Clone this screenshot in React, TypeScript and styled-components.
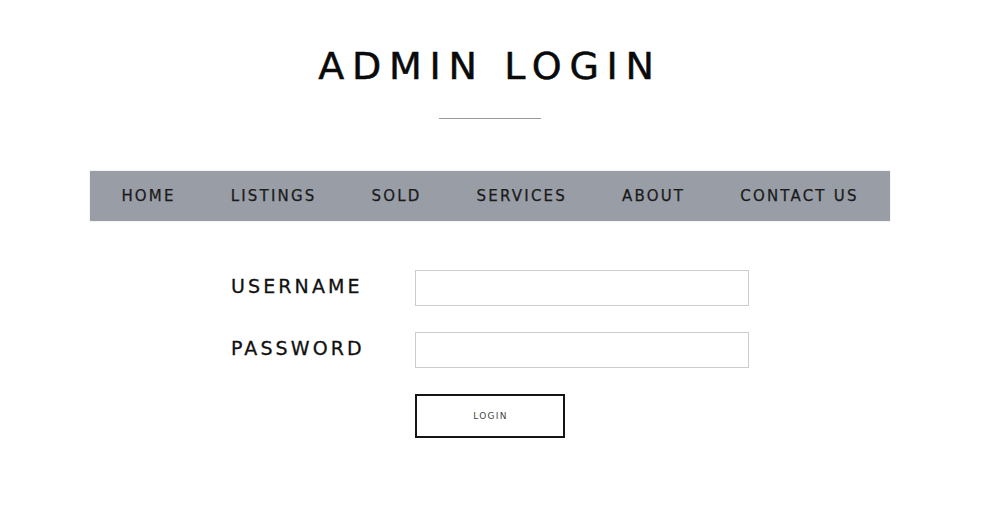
import React from "react";
import styled, { createGlobalStyle } from "styled-components";

const Global = createGlobalStyle`
  html, body { margin: 0; padding: 0; background: #ffffff; }
  body { font-family: "DejaVu Sans", "Liberation Sans", sans-serif; }
  * { box-sizing: border-box; }
`;

const Page = styled.div`
  width: 980px;
  display: flex;
  flex-direction: column;
  align-items: center;
  padding-top: 44px;
`;

const Title = styled.h1`
  margin: 0;
  font-size: 38px;
  line-height: 44px;
  font-weight: 400;
  letter-spacing: 7.7px;
  color: #0a0a0a;
  -webkit-text-stroke: 0.5px #0a0a0a;
`;

const Divider = styled.div`
  width: 102px;
  height: 1px;
  background: #9a9a9a;
  margin-top: 30px;
`;

const Nav = styled.nav`
  width: 800px;
  height: 50px;
  margin-top: 52px;
  background: #989da6;
  box-shadow: 0 0 1px rgba(0, 0, 0, 0.25);
  display: flex;
  align-items: center;
  justify-content: center;
  gap: 55px;
`;

const NavItem = styled.a`
  font-size: 15px;
  letter-spacing: 2.2px;
  color: #1a1a1a;
  -webkit-text-stroke: 0.25px #1a1a1a;
  text-decoration: none;
  white-space: nowrap;
  cursor: pointer;
`;

const Form = styled.form`
  width: 518px;
  margin-top: 49px;
  display: grid;
  grid-template-columns: 184px 334px;
  row-gap: 26px;
  align-items: center;
`;

const Label = styled.label`
  font-size: 19px;
  letter-spacing: 3.1px;
  color: #111;
  -webkit-text-stroke: 0.3px #111;
  padding-bottom: 4px;
`;

const Input = styled.input`
  width: 334px;
  height: 36px;
  border: 1px solid #cccccc;
  background: #fff;
  padding: 0 8px;
  outline: none;
  font-family: inherit;
`;

const Button = styled.button`
  grid-column: 2;
  width: 150px;
  height: 44px;
  border: 2px solid #151515;
  background: #fff;
  font-family: inherit;
  font-size: 9px;
  letter-spacing: 1.3px;
  color: #444;
  cursor: pointer;
  padding: 0 0 0 1px;
`;

const links = ["HOME", "LISTINGS", "SOLD", "SERVICES", "ABOUT", "CONTACT US"];

export default function App() {
  return (
    <>
      <Global />
      <Page>
        <Title>ADMIN LOGIN</Title>
        <Divider />
        <Nav>
          {links.map((l) => (
            <NavItem key={l}>{l}</NavItem>
          ))}
        </Nav>
        <Form onSubmit={(e) => e.preventDefault()}>
          <Label htmlFor="username">USERNAME</Label>
          <Input id="username" type="text" />
          <Label htmlFor="password">PASSWORD</Label>
          <Input id="password" type="password" />
          <Button type="submit">LOGIN</Button>
        </Form>
      </Page>
    </>
  );
}
